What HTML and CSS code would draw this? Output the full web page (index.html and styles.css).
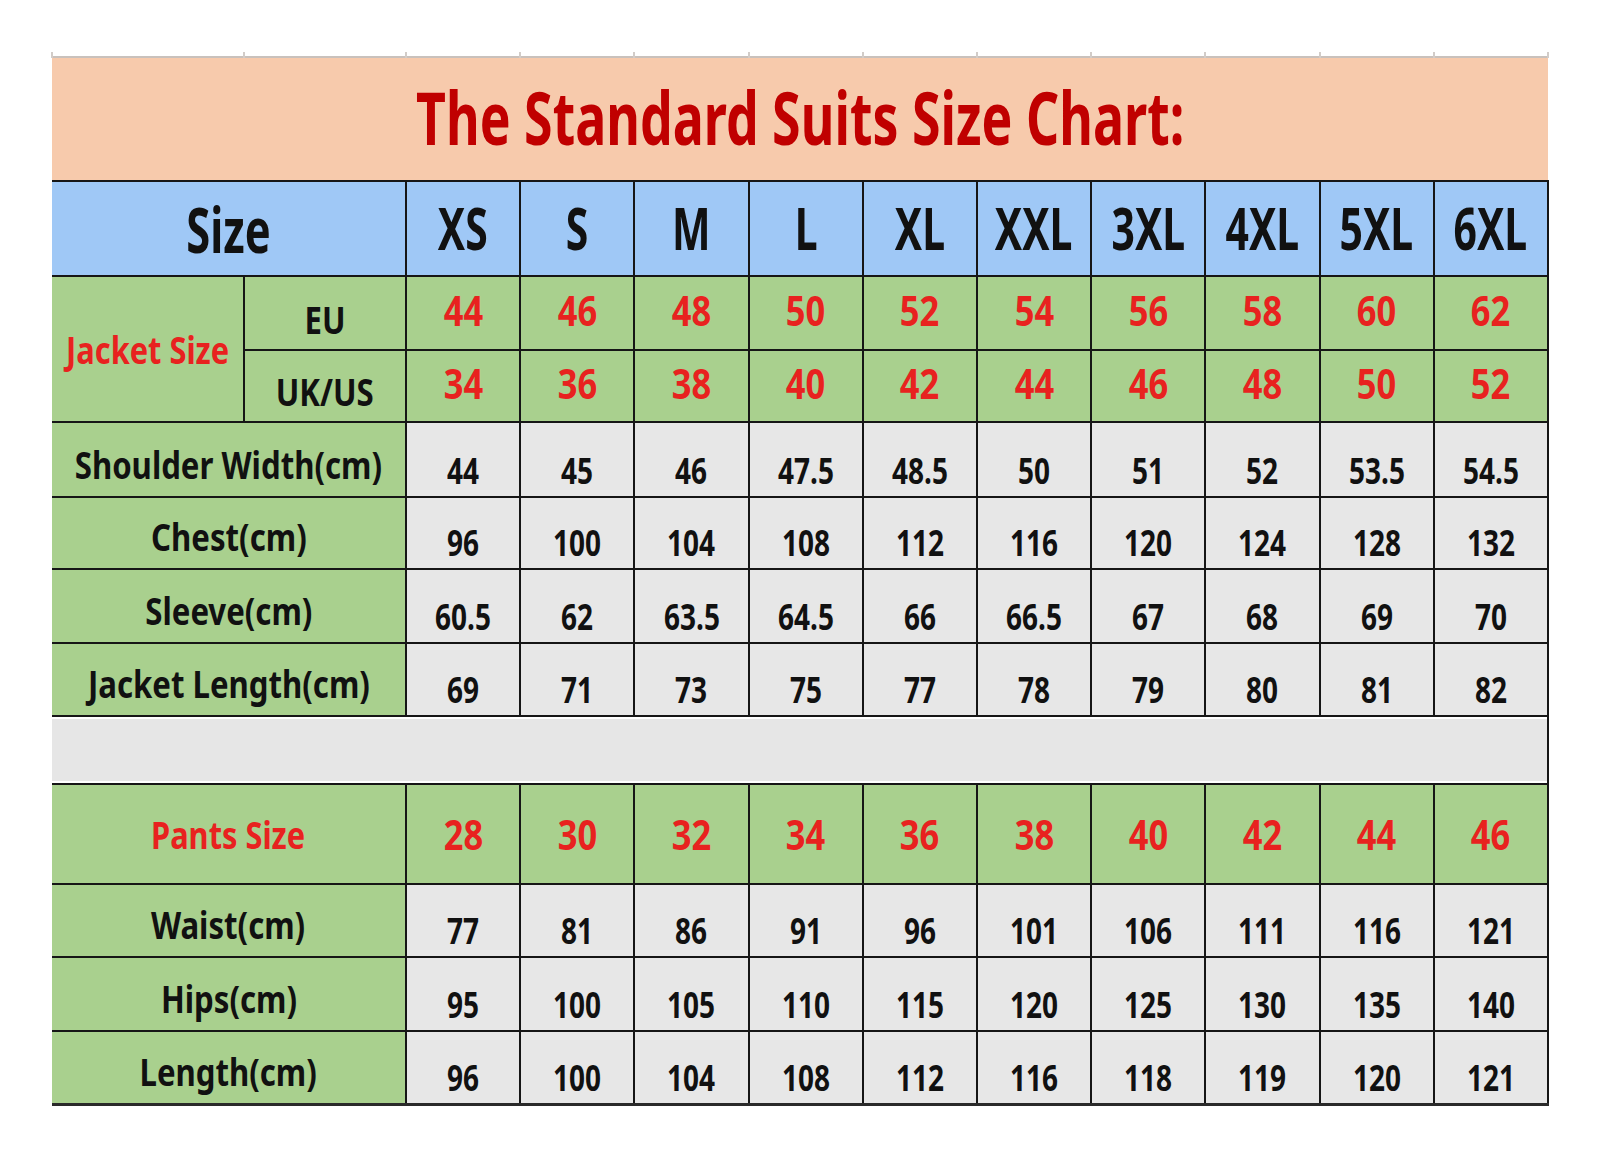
FILE: index.html
```html
<!DOCTYPE html>
<html lang="en">
<head>
    <meta charset="UTF-8">
    <meta name="viewport" content="width=device-width, initial-scale=1.0">
    <title>The Standard Suits Size Chart</title>
    <link rel="stylesheet" href="styles.css">
</head>
<body>
    <div class="sheet">
        <table class="chart">
            <colgroup>
                <col class="col-label">
                <col class="col-sub">
                <col class="col-size"><col class="col-size"><col class="col-size"><col class="col-size"><col class="col-size">
                <col class="col-size"><col class="col-size"><col class="col-size"><col class="col-size"><col class="col-size">
            </colgroup>

            <!-- spreadsheet gridline stubs above the title -->
            <tr class="ticks">
                <td></td><td></td><td></td><td></td><td></td><td></td>
                <td></td><td></td><td></td><td></td><td></td><td></td>
            </tr>

            <tr class="title-row">
                <td colspan="12"><span class="title">The Standard Suits Size Chart:</span></td>
            </tr>

            <tr class="head">
                <th colspan="2"><span>Size</span></th>
                <th><span>XS</span></th>
                <th><span>S</span></th>
                <th><span>M</span></th>
                <th><span>L</span></th>
                <th><span>XL</span></th>
                <th><span>XXL</span></th>
                <th><span>3XL</span></th>
                <th><span>4XL</span></th>
                <th><span>5XL</span></th>
                <th><span>6XL</span></th>
            </tr>

            <!-- Jacket -->
            <tr class="conv row-eu">
                <td rowspan="2" class="label red"><span>Jacket Size</span></td>
                <td class="label sub"><span>EU</span></td>
                <td class="num-red"><span>44</span></td><td class="num-red"><span>46</span></td><td class="num-red"><span>48</span></td>
                <td class="num-red"><span>50</span></td><td class="num-red"><span>52</span></td><td class="num-red"><span>54</span></td>
                <td class="num-red"><span>56</span></td><td class="num-red"><span>58</span></td><td class="num-red"><span>60</span></td>
                <td class="num-red"><span>62</span></td>
            </tr>
            <tr class="conv row-uk">
                <td class="label sub"><span>UK/US</span></td>
                <td class="num-red"><span>34</span></td><td class="num-red"><span>36</span></td><td class="num-red"><span>38</span></td>
                <td class="num-red"><span>40</span></td><td class="num-red"><span>42</span></td><td class="num-red"><span>44</span></td>
                <td class="num-red"><span>46</span></td><td class="num-red"><span>48</span></td><td class="num-red"><span>50</span></td>
                <td class="num-red"><span>52</span></td>
            </tr>
            <tr class="measure row-shoulder">
                <td colspan="2" class="label"><span>Shoulder Width(cm)</span></td>
                <td><span>44</span></td><td><span>45</span></td><td><span>46</span></td><td><span>47.5</span></td><td><span>48.5</span></td>
                <td><span>50</span></td><td><span>51</span></td><td><span>52</span></td><td><span>53.5</span></td><td><span>54.5</span></td>
            </tr>
            <tr class="measure row-chest">
                <td colspan="2" class="label"><span>Chest(cm)</span></td>
                <td><span>96</span></td><td><span>100</span></td><td><span>104</span></td><td><span>108</span></td><td><span>112</span></td>
                <td><span>116</span></td><td><span>120</span></td><td><span>124</span></td><td><span>128</span></td><td><span>132</span></td>
            </tr>
            <tr class="measure row-sleeve">
                <td colspan="2" class="label"><span>Sleeve(cm)</span></td>
                <td><span>60.5</span></td><td><span>62</span></td><td><span>63.5</span></td><td><span>64.5</span></td><td><span>66</span></td>
                <td><span>66.5</span></td><td><span>67</span></td><td><span>68</span></td><td><span>69</span></td><td><span>70</span></td>
            </tr>
            <tr class="measure row-jacket">
                <td colspan="2" class="label"><span>Jacket Length(cm)</span></td>
                <td><span>69</span></td><td><span>71</span></td><td><span>73</span></td><td><span>75</span></td><td><span>77</span></td>
                <td><span>78</span></td><td><span>79</span></td><td><span>80</span></td><td><span>81</span></td><td><span>82</span></td>
            </tr>

            <tr class="gap">
                <td colspan="12"></td>
            </tr>

            <!-- Pants -->
            <tr class="conv row-pants">
                <td colspan="2" class="label red"><span>Pants Size</span></td>
                <td class="num-red"><span>28</span></td><td class="num-red"><span>30</span></td><td class="num-red"><span>32</span></td>
                <td class="num-red"><span>34</span></td><td class="num-red"><span>36</span></td><td class="num-red"><span>38</span></td>
                <td class="num-red"><span>40</span></td><td class="num-red"><span>42</span></td><td class="num-red"><span>44</span></td>
                <td class="num-red"><span>46</span></td>
            </tr>
            <tr class="measure row-waist">
                <td colspan="2" class="label"><span>Waist(cm)</span></td>
                <td><span>77</span></td><td><span>81</span></td><td><span>86</span></td><td><span>91</span></td><td><span>96</span></td>
                <td><span>101</span></td><td><span>106</span></td><td><span>111</span></td><td><span>116</span></td><td><span>121</span></td>
            </tr>
            <tr class="measure row-hips">
                <td colspan="2" class="label"><span>Hips(cm)</span></td>
                <td><span>95</span></td><td><span>100</span></td><td><span>105</span></td><td><span>110</span></td><td><span>115</span></td>
                <td><span>120</span></td><td><span>125</span></td><td><span>130</span></td><td><span>135</span></td><td><span>140</span></td>
            </tr>
            <tr class="measure row-length last">
                <td colspan="2" class="label"><span>Length(cm)</span></td>
                <td><span>96</span></td><td><span>100</span></td><td><span>104</span></td><td><span>108</span></td><td><span>112</span></td>
                <td><span>116</span></td><td><span>118</span></td><td><span>119</span></td><td><span>120</span></td><td><span>121</span></td>
            </tr>
        </table>
    </div>
</body>
</html>
```

FILE: styles.css
```css
body {
    margin: 0;
    background: #ffffff;
    font-family: "Noto Sans", "Open Sans", "DejaVu Sans", sans-serif;
    font-weight: bold;
    color: #111;
}

.sheet {
    padding: 52px 0 0 51px;
}

.chart {
    border-collapse: collapse;
    table-layout: fixed;
    width: 1496px;
}

.col-label { width: 192px; }
.col-sub { width: 162px; }
.col-size { width: 114.2px; }

.chart td,
.chart th {
    padding: 0;
    text-align: center;
    border: 2px solid #161616;
    line-height: 1;
    white-space: nowrap;
}

/* cell text is a narrow, tall face: squeeze the glyphs sideways.
   the negative margin keeps wide labels centred in their cell */
.chart span {
    display: inline-block;
    margin: 0 -40px;
    transform: scaleX(0.8);
}

/* left edge of the sheet has no dark line */
.chart tr > :first-child {
    border-left: none;
}

/* gridline stubs */
.ticks td {
    height: 4px;
    border: none;
    border-right: 2px solid #d2ccc8;
}

.ticks td:first-child {
    border-left: 2px solid #d2ccc8;
}

/* Title */
.title-row td {
    height: 122px;
    background: #f7caac;
    border-top: 2px solid #c9c1bc;
    border-left: 2px solid #b8d7a2;
    border-right: none;
    border-bottom: 2px solid #161616;
    vertical-align: middle;
}

.chart .title {
    font-size: 64px;
    color: #c00000;
    transform: scale(0.81, 1.16);
    padding-bottom: 4px;
}

/* Size header */
.head th {
    height: 93px;
    background: #9fc8f6;
    font-size: 47px;
    vertical-align: middle;
}

.head th:first-child {
    font-size: 50px;
}

.head span {
    transform: scale(0.87, 1.25);
}

/* Green label cells */
.chart td.label {
    background: #a9d08e;
    font-size: 38px;
    vertical-align: bottom;
    padding-bottom: 13px;
}

.label span {
    transform: scaleX(0.82);
}

.chart td.label.sub {
    padding-bottom: 11px;
}

.chart td.label.red {
    color: #e8221f;
    vertical-align: middle;
    padding-bottom: 0;
}

.label.red span {
    transform: scaleX(0.81);
}

.measure td {
    background: #e7e7e7;
    font-size: 35px;
    vertical-align: bottom;
    padding-bottom: 8px;
}

.conv td {
    background: #a9d08e;
}

.num-red {
    color: #e8221f;
    font-size: 41px;
    vertical-align: middle;
}

.num-red span {
    transform: scaleX(0.84);
}

.row-eu .num-red,
.row-uk .num-red {
    padding-bottom: 6px;
}

/* content heights: row pitch minus bottom padding and border */
.row-eu td { height: 61px; }
.row-uk td { height: 59px; }
.row-shoulder td { height: 60px; }
.row-chest td { height: 57px; }
.row-sleeve td { height: 59px; }
.row-jacket td { height: 58px; }
.row-pants td { height: 98px; }
.row-waist td { height: 58px; }
.row-hips td { height: 59px; }
.row-length td { height: 58px; }

/* blank spacer row between jacket and pants */
.gap td {
    height: 66px;
    background: #e6e6e6;
    border-left: none;
    box-shadow: inset 0 2px 0 #ffffff, inset 0 -2px 0 #ffffff;
}

.last td {
    border-bottom: 3px solid #2a2a2a;
}
```
